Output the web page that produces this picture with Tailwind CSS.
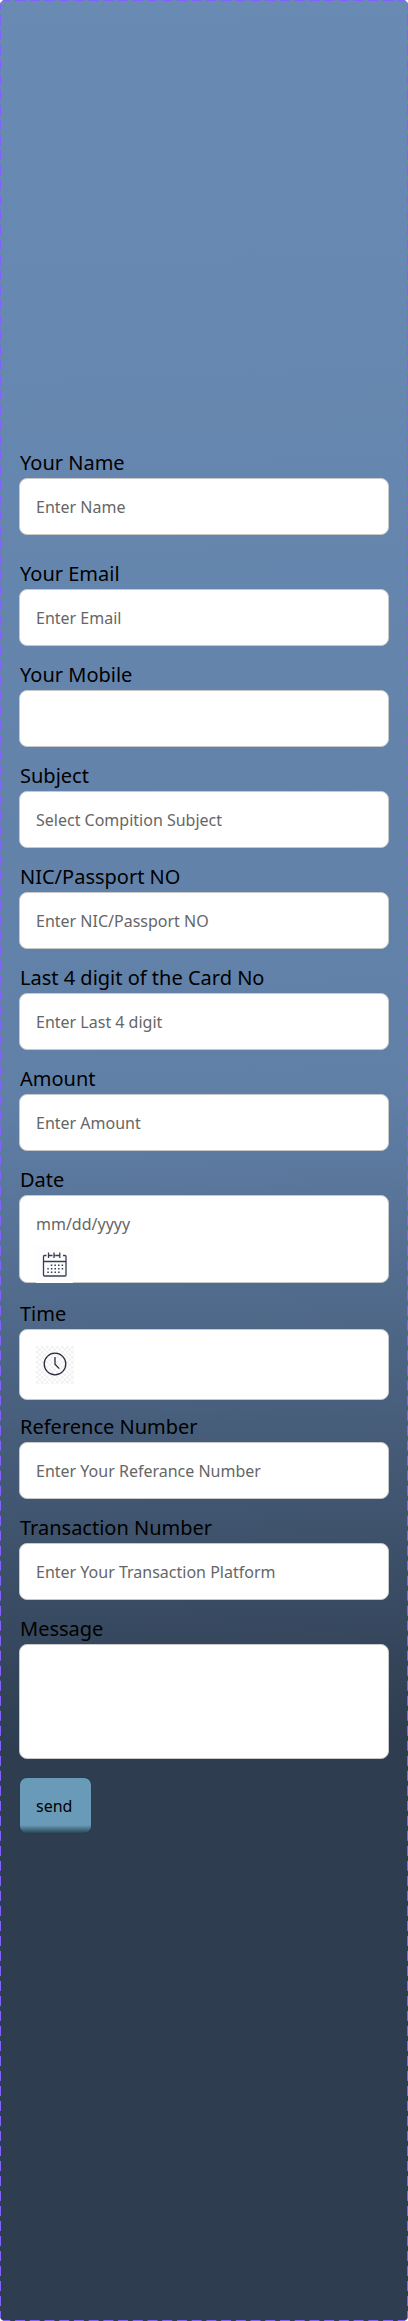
<!DOCTYPE html>
<html lang="en">
<head>
<meta charset="utf-8">
<title>Payment form</title>
<script src="https://cdn.jsdelivr.net/npm/@tailwindcss/browser@4"></script>
</head>
<body class="bg-white font-['Noto_Sans',sans-serif] text-black">
<main class="relative w-[408px] h-[2321px] rounded-[5px] overflow-hidden bg-[linear-gradient(178deg,#698bb3_0%,#6180a8_47%,#2e3d50_75%,#2e3d50_100%)]">
  <svg class="absolute inset-0 w-full h-full pointer-events-none" fill="none" stroke="#8361ff" stroke-width="1">
    <path d="M.3 .5H408M.3 2320.5H408" stroke-dasharray="10 4.72"/>
    <path d="M.5 0V2321M407.5 0V2321" stroke-dasharray="10 5.007"/>
  </svg>
  <form class="flex flex-col pt-[450px] px-[19px] text-base leading-6 text-[#666]">
    <label class="flex flex-col mb-[26px]">
      <span class="h-7 pl-px text-xl leading-[25px] text-black">Your Name</span>
      <span class="h-[57px] rounded-lg border border-[#c8c8c8] bg-white px-4 py-4">Enter Name</span>
    </label>
    <label class="flex flex-col mb-4">
      <span class="h-7 pl-px text-xl leading-[25px] text-black">Your Email</span>
      <span class="h-[57px] rounded-lg border border-[#c8c8c8] bg-white px-4 py-4">Enter Email</span>
    </label>
    <label class="flex flex-col mb-4">
      <span class="h-7 pl-px text-xl leading-[25px] text-black">Your Mobile</span>
      <span class="h-[57px] rounded-lg border border-[#c8c8c8] bg-white px-4 py-4"></span>
    </label>
    <label class="flex flex-col mb-4">
      <span class="h-7 pl-px text-xl leading-[25px] text-black">Subject</span>
      <span class="h-[57px] rounded-lg border border-[#c8c8c8] bg-white px-4 py-4">Select Compition Subject</span>
    </label>
    <label class="flex flex-col mb-4">
      <span class="h-7 pl-px text-xl leading-[25px] text-black">NIC/Passport NO</span>
      <span class="h-[57px] rounded-lg border border-[#c8c8c8] bg-white px-4 py-4">Enter NIC/Passport NO</span>
    </label>
    <label class="flex flex-col mb-4">
      <span class="h-7 pl-px text-xl leading-[25px] text-black">Last 4 digit of the Card No</span>
      <span class="h-[57px] rounded-lg border border-[#c8c8c8] bg-white px-4 py-4">Enter Last 4 digit</span>
    </label>
    <label class="flex flex-col mb-4">
      <span class="h-7 pl-px text-xl leading-[25px] text-black">Amount</span>
      <span class="h-[57px] rounded-lg border border-[#c8c8c8] bg-white px-4 py-4">Enter Amount</span>
    </label>
    <label class="flex flex-col mb-[18px]">
      <span class="h-7 pl-px text-xl leading-[25px] text-black">Date</span>
      <span class="flex flex-col h-[88px] rounded-lg border border-[#c8c8c8] bg-white px-4 pt-4">mm/dd/yyyy
        <svg class="mt-[10px] w-[37px] h-[37px] shrink-0 bg-[#fdfdfd]" viewBox="0 0 37 37" fill="none" stroke="#354052" stroke-width="1.3">
          <path d="M10.500 9.500H8.500Q7.500 9.500 7.500 10.500V29Q7.500 30 8.500 30H29Q30 30 30 29V10.500Q30 9.500 29 9.500H27M14 9.500H16.500M19.500 9.500H22M7.500 15.500H30"/>
          <path d="M12.500 6.500V12M18 6.500V12M23.800 6.500V12M12.500 9.500H14M18 9.500H19.500M22 9.500H24"/>
          <path stroke-width="1.500" d="M14.800 19.300H28M11.300 22.800H28M11.300 26.300H24" stroke-dasharray="1.500 2.100"/>
        </svg>
      </span>
    </label>
    <label class="flex flex-col mb-[14px]">
      <span class="h-7 pl-px text-xl leading-[25px] text-black">Time</span>
      <span class="h-[71px] rounded-lg border border-[#c8c8c8] bg-white px-4 py-4">
        <svg class="w-[38px] h-[38px]" viewBox="0 0 38 38" fill="none" stroke="#292b3b" stroke-width="1.3">
          <defs><pattern id="checker" width="5" height="5" patternUnits="userSpaceOnUse"><path d="M0 0h2.500v2.500H0zM2.500 2.500h2.500v2.500H2.500z" fill="#f1f1f1" stroke="none"/></pattern></defs>
          <path d="M0 0H38V38H0z" fill="url(#checker)" stroke="none"/>
          <circle cx="19" cy="18" r="10.800"/>
          <path d="M19 11V18.200L23.300 22.600"/>
        </svg>
      </span>
    </label>
    <label class="flex flex-col mb-4">
      <span class="h-7 pl-px text-xl leading-[25px] text-black">Reference Number</span>
      <span class="h-[57px] rounded-lg border border-[#c8c8c8] bg-white px-4 py-4">Enter Your Referance Number</span>
    </label>
    <label class="flex flex-col mb-4">
      <span class="h-7 pl-px text-xl leading-[25px] text-black">Transaction Number</span>
      <span class="h-[57px] rounded-lg border border-[#c8c8c8] bg-white px-4 py-4">Enter Your Transaction Platform</span>
    </label>
    <label class="flex flex-col mb-[18px]">
      <span class="h-7 pl-px text-xl leading-[25px] text-black">Message</span>
      <span class="h-[115px] rounded-lg border border-[#c8c8c8] bg-white"></span>
    </label>
    <button type="button" class="self-start w-[73px] h-[57px] rounded-lg border border-[#1d4059] bg-[linear-gradient(to_top,#2b4657_0px,#699bb9_8px)] px-4 text-left text-black">send</button>
  </form>
</main>
</body>
</html>
